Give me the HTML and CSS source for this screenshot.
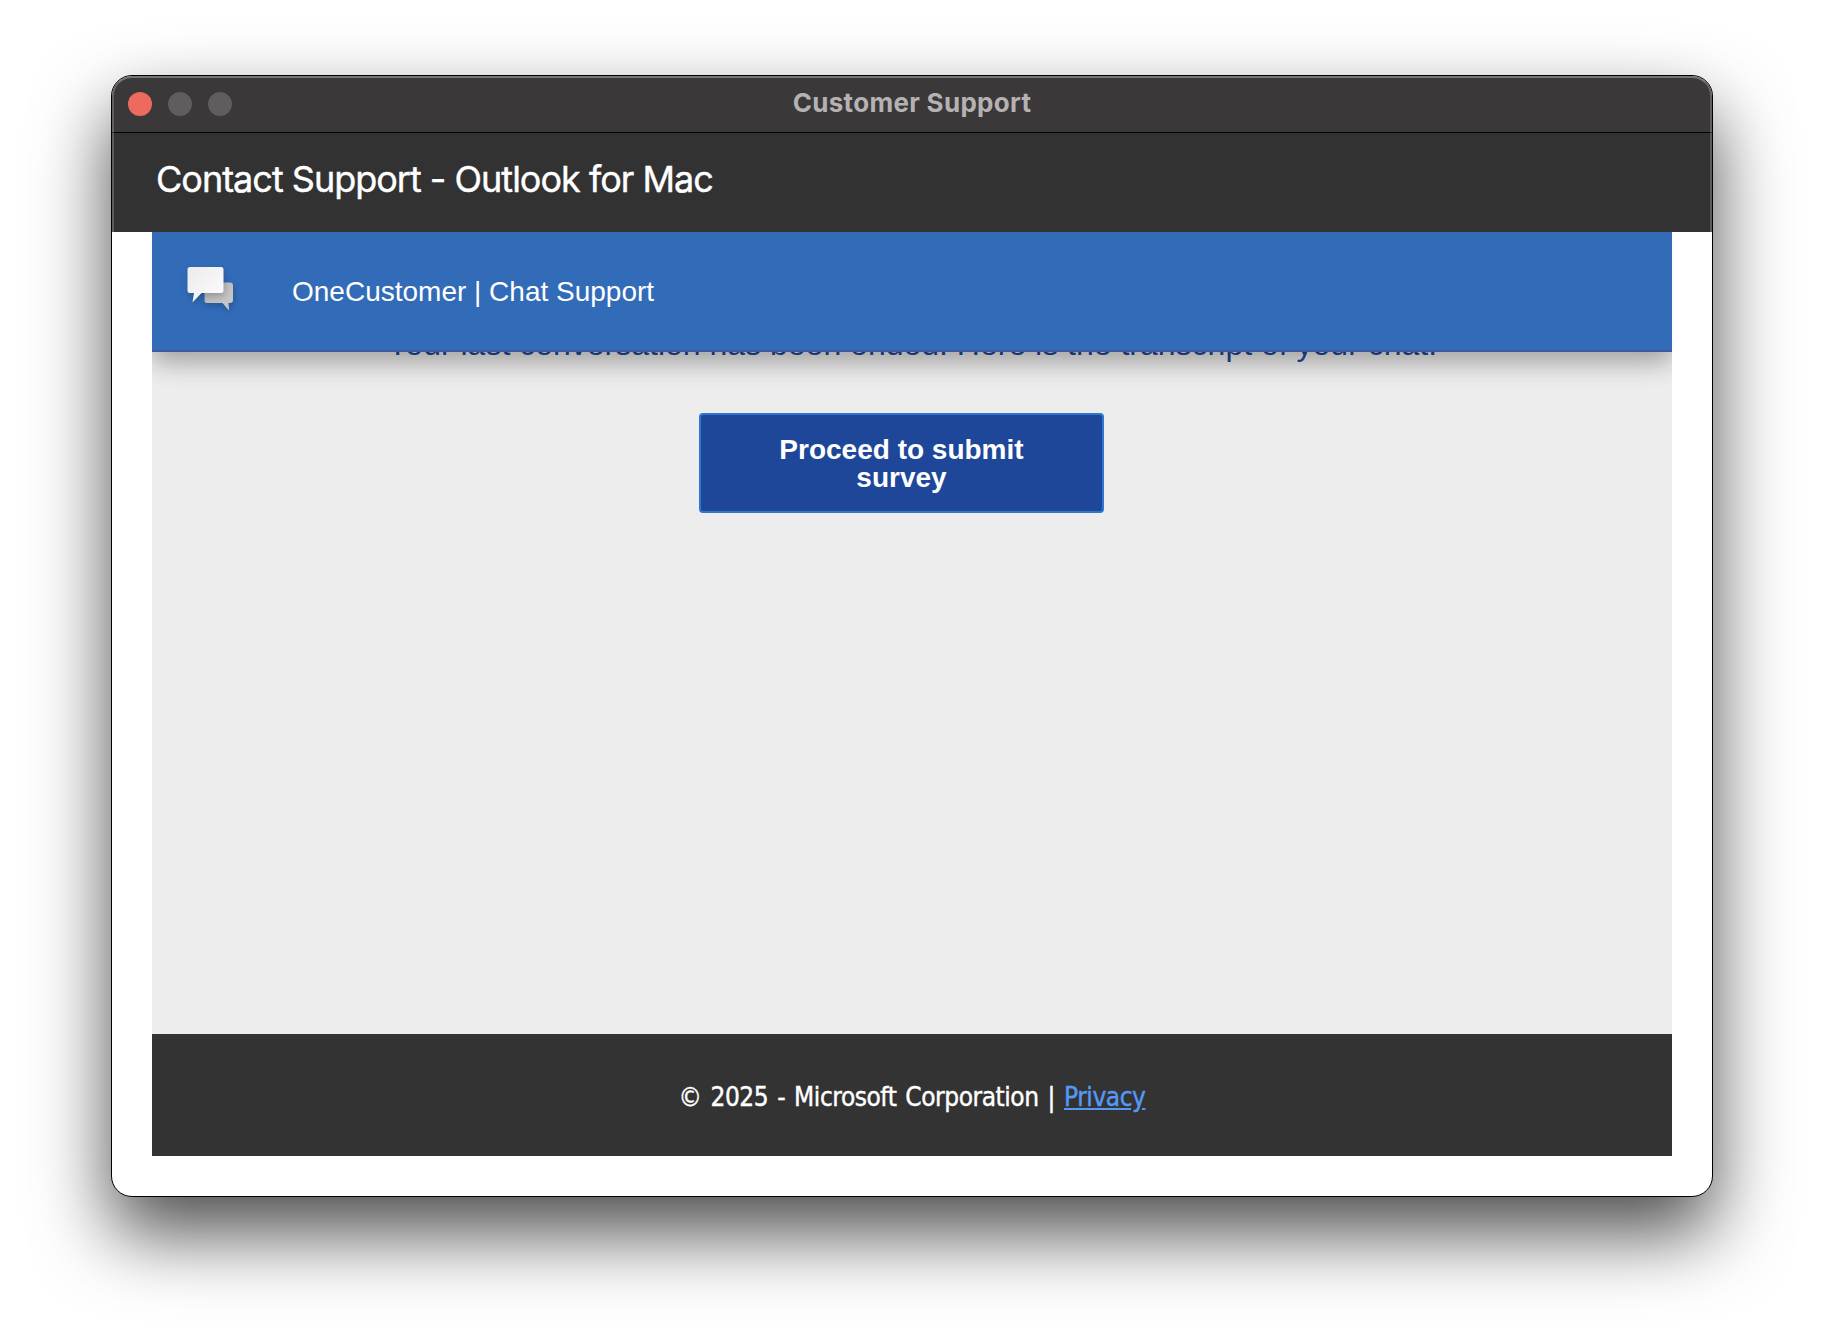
FILE: index.html
```html
<!DOCTYPE html>
<html lang="en">
  <head>
    <meta charset="UTF-8" />
    <meta name="viewport" content="width=device-width, initial-scale=1.0" />
    <title>Customer Support</title>
    <link rel="stylesheet" href="styles.css">
  </head>
  <body>
    <div class="window">
      <div class="titlebar">
        <div class="lights">
          <span class="light close"></span>
          <span class="light"></span>
          <span class="light"></span>
        </div>
        <div class="window-title">Customer Support</div>
      </div>

      <header class="page-header">
        <h1>Contact Support - Outlook for Mac</h1>
      </header>

      <main class="content">
        <div class="chat-bar">
          <svg class="chat-icon" width="60" height="60" viewBox="0 0 60 60">
            <defs>
              <linearGradient id="front" x1="0" y1="0" x2="1" y2="1">
                <stop offset="0" stop-color="#ebebeb" />
                <stop offset="1" stop-color="#fdfdfd" />
              </linearGradient>
              <linearGradient id="back" x1="0" y1="0" x2="1" y2="1">
                <stop offset="0" stop-color="#b4b4b4" />
                <stop offset="1" stop-color="#cccccc" />
              </linearGradient>
            </defs>
            <path class="bubble" fill="url(#back)" d="M28 21.5h23q3 0 3 3v14.500q0 3-3 3h-1.500l.5 7.500-6.500-7.500H28q-2.500 0-2.500-2.500V24z" />
            <path class="bubble" fill="url(#front)" d="M11 6h31q2.500 0 2.500 2.500v21q0 2.500-2.500 2.500H22.500l-9 9.500 1.500-9.500h-4q-2.500 0-2.500-2.500v-21q0-2.500 2.500-2.500z" />
          </svg>
          <div class="chat-title">OneCustomer | Chat Support</div>
        </div>

        <div class="chat-body">
          <p class="notice">Your last conversation has been ended. Here is the transcript of your chat.</p>
          <button class="survey-btn">Proceed to submit survey</button>
        </div>

        <footer class="footer">
          <p>© 2025 - Microsoft Corporation | <a href="#">Privacy</a></p>
        </footer>
      </main>
    </div>
  </body>
</html>
```
FILE: styles.css
```css
* {
  box-sizing: border-box;
}
body {
  margin: 0;
  height: 1344px;
  padding-top: 75px;
  background: #fff;
  overflow: hidden;
}
.window {
  position: relative;
  width: 1602px;
  height: 1122px;
  margin: 0 auto;
  border: 1px solid #000;
  border-radius: 21px;
  overflow: hidden;
  background: #fff;
  box-shadow: 0 36px 76px rgba(0, 0, 0, 0.7);
}
/* light rim on the dark part of the window */
.window::after {
  content: "";
  position: absolute;
  top: 0;
  left: 0;
  right: 0;
  height: 156px;
  border: 2px solid rgba(255, 255, 255, 0.2);
  border-top-color: rgba(255, 255, 255, 0.3);
  border-bottom: none;
  border-radius: 20px 20px 0 0;
}
.titlebar {
  display: grid;
  grid-template-columns: 1fr auto 1fr;
  align-items: center;
  height: 57px;
  padding: 0 16px;
  background: #3b3839;
  border-bottom: 1px solid #000;
}
.lights {
  display: flex;
  gap: 16px;
}
.light {
  width: 24px;
  height: 24px;
  border-radius: 50%;
  background: #5f5d5e;
}
.light.close {
  background: #ed6a5e;
}
.window-title {
  padding-bottom: 2px;
  font-family: Inter, sans-serif;
  font-size: 26px;
  font-weight: 700;
  line-height: 52px;
  letter-spacing: 0.3px;
  color: #b4b2b3;
}
.page-header {
  height: 99px;
  padding: 23px 44px 0;
  background: #323232;
}
.page-header h1 {
  margin: 0;
  font-family: Inter, sans-serif;
  font-size: 36px;
  font-weight: 400;
  line-height: 46px;
  letter-spacing: -1px;
  color: #fff;
  -webkit-text-stroke: 0.4px #fff;
}
.content {
  display: flex;
  flex-direction: column;
  height: 924px;
  margin: 0 40px;
  overflow: hidden;
  background: #ededed;
  font-family: "Liberation Sans", Arial, sans-serif;
}
.chat-bar {
  position: relative;
  z-index: 1;
  display: flex;
  align-items: center;
  flex: none;
  height: 120px;
  padding-left: 27px;
  background: #326bb7;
  border-bottom: 2px solid #3c5c9f;
  box-shadow: 0 10px 22px rgba(0, 0, 0, 0.2), 0 8px 30px rgba(0, 0, 0, 0.16);
}
.bubble {
  filter: drop-shadow(1px 3px 3px rgba(0, 0, 0, 0.2));
}
.chat-title {
  margin-left: 53px;
  padding-top: 2px;
  font-size: 28px;
  color: #fff;
}
.chat-body {
  flex: 1;
  display: flex;
  flex-direction: column;
  align-items: center;
}
.notice {
  margin: -28px 0 0;
  font-size: 32px;
  line-height: 40px;
  color: #1e4899;
  white-space: nowrap;
}
.survey-btn {
  width: 405px;
  height: 100px;
  margin: 49px 21px 0 0;
  padding: 2px 70px 0;
  font-family: inherit;
  font-size: 28px;
  font-weight: 700;
  line-height: 28px;
  color: #fff;
  background: #1e4799;
  border: 2px solid #3076cf;
  border-radius: 4px;
}
.footer {
  flex: none;
  height: 122px;
  background: #333;
  text-align: center;
}
.footer p {
  margin: 0;
  padding-top: 2px;
  font-family: "DejaVu Sans Condensed", "DejaVu Sans", sans-serif;
  font-stretch: condensed;
  font-size: 26px;
  line-height: 122px;
  letter-spacing: -0.45px;
  word-spacing: 2px;
  color: #fff;
  -webkit-text-stroke: 0.4px;
}
.footer a {
  color: #5599f5;
}
```
